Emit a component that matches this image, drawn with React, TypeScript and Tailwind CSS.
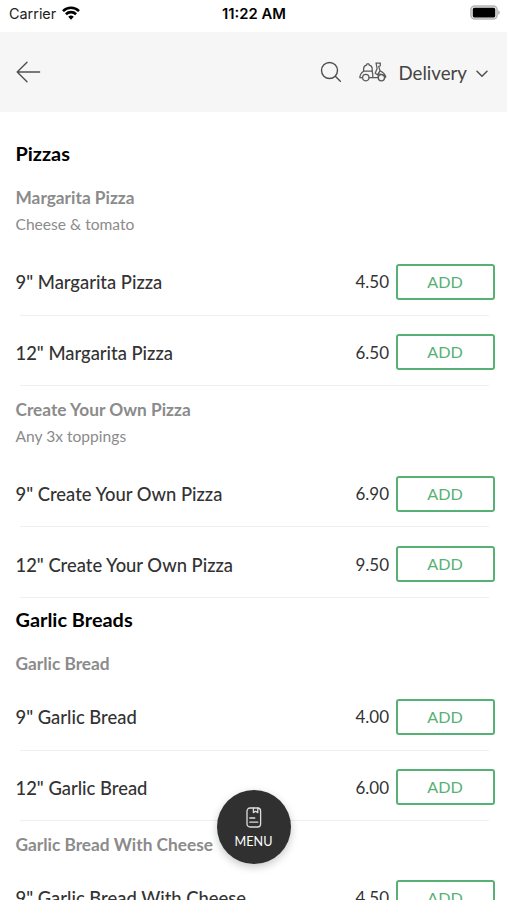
import React from "react";

type Item = { name: string; price: string };
type Group = { title: string; description?: string; items: Item[] };
type Section = { title: string; groups: Group[] };

const sections: Section[] = [
  {
    title: "Pizzas",
    groups: [
      {
        title: "Margarita Pizza",
        description: "Cheese & tomato",
        items: [
          { name: '9" Margarita Pizza', price: "4.50" },
          { name: '12" Margarita Pizza', price: "6.50" },
        ],
      },
      {
        title: "Create Your Own Pizza",
        description: "Any 3x toppings",
        items: [
          { name: '9" Create Your Own Pizza', price: "6.90" },
          { name: '12" Create Your Own Pizza', price: "9.50" },
        ],
      },
    ],
  },
  {
    title: "Garlic Breads",
    groups: [
      {
        title: "Garlic Bread",
        items: [
          { name: '9" Garlic Bread', price: "4.00" },
          { name: '12" Garlic Bread', price: "6.00" },
        ],
      },
      {
        title: "Garlic Bread With Cheese",
        items: [{ name: '9" Garlic Bread With Cheese', price: "4.50" }],
      },
    ],
  },
];

function StatusBar() {
  return (
    <div className="grid h-8 shrink-0 grid-cols-3 items-start bg-white pt-1 pr-[7px] pl-[9px] font-['Inter',sans-serif] text-black">
      <div className="flex items-center gap-[6px] text-[14.4px] leading-5 text-[#222]">
        <span>Carrier</span>
        <svg width="18" height="14" viewBox="0 0 18 14" fill="none" stroke="#000" strokeWidth="2.6" className="-mt-0.5">
          <path d="M1 5.1a11.4 11.4 0 0 1 16 0" />
          <path d="M3.9 8.2a7.3 7.3 0 0 1 10.2 0" />
          <path d="M9 13.8 6.2 10.8a4 4 0 0 1 5.6 0Z" fill="#000" stroke="none" />
        </svg>
      </div>
      <div className="-ml-px text-center text-[14.8px] leading-5 font-semibold whitespace-nowrap">11:22 AM</div>
      <svg width="30" height="16" viewBox="0 0 30 16" className="mt-px justify-self-end">
        <rect x="0.9" y="0.9" width="26.2" height="13.2" rx="3.8" fill="#e6e6e6" stroke="#b5b5b5" strokeWidth="1.5" />
        <rect x="2.8" y="2.8" width="22.4" height="9.6" rx="1.6" fill="#000" />
        <path d="M28.3 5.2c1.9.8 1.9 3.8 0 4.6Z" fill="#a5a5a5" />
      </svg>
    </div>
  );
}

function Scooter() {
  return (
    <svg width="28" height="20" viewBox="0 0 28 20" fill="none" stroke="#5a5a5a" strokeWidth="1.25" strokeLinecap="round" strokeLinejoin="round">
      <path d="M4.6 9.2V6.6q.2-2.8 2.9-3.4l.5-1.4h1.8l.5 1.4q2.7.6 2.9 3.4v2.6" />
      <path d="M4.6 9.2h8.6M4.6 9.2Q1.1 11.4.8 15.6h2.6M13.2 9.2q.9 3 .6 6.4" />
      <circle cx="6.8" cy="15.6" r="3.2" />
      <path d="M10 15.6h9.2M17 1h4.4l-.2 3-1.5.4 1.3 4.4q4.7 2 5.8 6l-1.2 1.2M17 1l1.1 5.4-1.9 4.8 3 2v2.4M21 8.8l-2.1 3.4q4.2-.7 6.8 1.8" />
      <circle cx="22.4" cy="15.8" r="3.1" />
    </svg>
  );
}

function Header() {
  return (
    <header className="flex h-20 shrink-0 items-center bg-[#f6f6f6] pr-[19px] pl-4 text-[#444]">
      <svg width="25" height="22" viewBox="0 0 25 22" fill="none" stroke="#505050" strokeWidth="1.4" strokeLinecap="round" strokeLinejoin="round">
        <path d="M23.6 11H1.2M11 1.2 1.2 11 11 20.8" />
      </svg>
      <svg width="22" height="22" viewBox="0 0 22 22" fill="none" stroke="#505050" strokeWidth="1.4" strokeLinecap="round" className="ml-auto">
        <circle cx="9.5" cy="9.5" r="8" />
        <path d="m15.3 15.3 5 5" />
      </svg>
      <div className="ml-[17px] flex items-center">
        <Scooter />
        <span className="ml-[11px] pt-px text-[18.7px] leading-6">Delivery</span>
        <svg width="12" height="8" viewBox="0 0 12 8" fill="none" stroke="#505050" strokeWidth="1.5" strokeLinecap="round" strokeLinejoin="round" className="mt-[3px] ml-[9px]">
          <path d="m1 1.2 5 5 5-5" />
        </svg>
      </div>
    </header>
  );
}

function ItemRow({ name, price }: Item) {
  return (
    <li className="relative flex h-[70.5px] items-center pt-[3px] pr-3 pl-[15.5px] text-[#333]">
      <span className="pt-px text-[18.4px] leading-6 font-medium whitespace-nowrap">{name}</span>
      <span className="ml-auto pt-px text-[17px] leading-6">{price}</span>
      <button className="ml-[7px] h-9 w-[99px] rounded-[3px] border-2 border-[#58b174] bg-white pr-px text-[16.2px] leading-6 text-[#58b174]">ADD</button>
      <span className="absolute right-[18px] bottom-0 left-5 h-px bg-[#efefef]" />
    </li>
  );
}

function GroupBlock({ title, description, items }: Group) {
  return (
    <div>
      <div className={description ? "h-[70.8px] pt-3 pl-[15.5px] text-[#8b8b8b]" : "h-10 pt-3 pl-[15.5px] text-[#8b8b8b]"}>
        <h3 className="text-[17.3px] leading-6 font-bold">{title}</h3>
        {description && <p className="mt-0.5 text-[15.6px] leading-6">{description}</p>}
      </div>
      <ul>
        {items.map((item) => (
          <ItemRow key={item.name} {...item} />
        ))}
      </ul>
    </div>
  );
}

function MenuButton() {
  return (
    <button className="absolute top-[790px] left-[217px] flex size-[74px] flex-col items-center rounded-full bg-[#303030] pt-[17px] text-white shadow-[0_3px_9px_rgba(0,0,0,0.22)]">
      <svg width="16" height="21" viewBox="0 0 16 21" fill="none" stroke="#ddd" strokeWidth="1.3" strokeLinecap="round" strokeLinejoin="round" className="mr-px">
        <rect x="1" y="1" width="13.6" height="19" rx="3" />
        <path d="M7.4 1v4.6l2.2-1.4 2.2 1.4V1M3.8 11h5M3.8 15.2h8" />
      </svg>
      <span className="mt-[5px] pr-px text-[12.6px] leading-[18px]">MENU</span>
    </button>
  );
}

export default function App() {
  return (
    <main className="relative flex h-[900px] w-full flex-col overflow-hidden bg-white font-['Lato',sans-serif]">
      <StatusBar />
      <Header />
      <div className="min-h-0 flex-1 overflow-hidden pt-5">
        {sections.map((section) => (
          <section key={section.title}>
            <h2 className="h-[42.3px] pt-[9.3px] pl-[15.5px] text-[19.9px] leading-6 font-bold text-black">{section.title}</h2>
            {section.groups.map((group) => (
              <GroupBlock key={group.title} {...group} />
            ))}
          </section>
        ))}
      </div>
      <MenuButton />
    </main>
  );
}
